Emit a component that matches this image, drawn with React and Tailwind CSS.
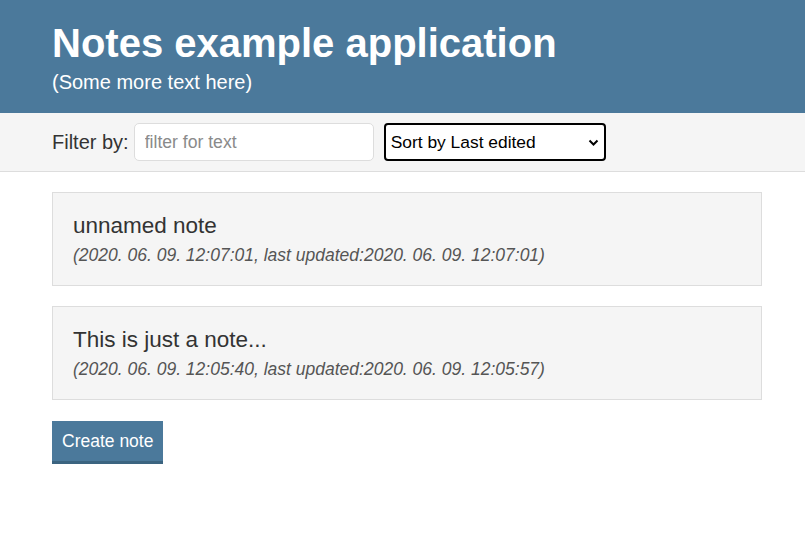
import React from 'react';

export default function App() {
  const notes = [
    { title: 'unnamed note', created: '2020. 06. 09. 12:07:01', updated: '2020. 06. 09. 12:07:01' },
    { title: 'This is just a note...', created: '2020. 06. 09. 12:05:40', updated: '2020. 06. 09. 12:05:57' },
  ];

  return (
    <div className="min-h-screen bg-white font-['Liberation_Sans',Arial,sans-serif] text-[#333]">
      {/* Header */}
      <header className="bg-[#4b799b] h-[113px] pl-[52px] pt-[20px]">
        <h1 className="text-white font-bold text-[40px] leading-[46px]">Notes example application</h1>
        <p className="text-white text-[20px] leading-[24px] mt-[4px]">(Some more text here)</p>
      </header>

      {/* Filter bar */}
      <div className="bg-[#f5f5f5] border-b border-[#ddd] h-[59px] pl-[52px] flex items-center">
        <label className="text-[20px] text-[#333]">Filter by:</label>
        <input
          className="ml-[5px] w-[240px] h-[38px] bg-white border border-[#ddd] rounded-[5px] px-[10px] text-[17.6px] placeholder:text-[#8a8a8a] outline-none"
          placeholder="filter for text"
        />
        <div className="relative ml-[10px] w-[222px] h-[38px] bg-white border-2 border-black rounded-[4px] flex items-center pl-[5px] text-[17.4px] text-black">
          <span>Sort by Last edited</span>
          <svg className="absolute right-[5px] top-[14px]" width="11" height="8" viewBox="0 0 11 8">
            <path d="M1.5 1.5 L5.5 5.5 L9.5 1.5" fill="none" stroke="black" strokeWidth="2" />
          </svg>
        </div>
      </div>

      {/* Notes */}
      <main className="ml-[52px] w-[710px] pt-[20px] flex flex-col gap-[20px]">
        {notes.map(n => (
          <div key={n.title} className="bg-[#f5f5f5] border border-[#ddd] h-[94px] px-[20px] pt-[19px]">
            <div className="text-[22.5px] leading-[27px] text-[#333]">{n.title}</div>
            <div className="italic text-[17.5px] leading-[22px] text-[#555] mt-[5px]">
              ({n.created}, last updated:{n.updated})
            </div>
          </div>
        ))}
        <div className="pt-[1px]">
          <button className="bg-[#4b799b] border-b-[3px] border-[#3b6480] text-white text-[17.5px] h-[43px] px-[10px]">
            Create note
          </button>
        </div>
      </main>
    </div>
  );
}
